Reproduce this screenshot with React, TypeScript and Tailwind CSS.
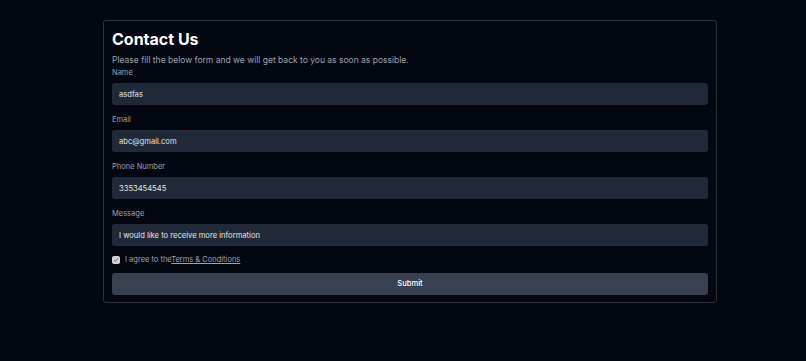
import { useState } from 'react';

const FIELDS = [
  { label: 'Name', value: 'asdfas' },
  { label: 'Email', value: 'abc@gmail.com' },
  { label: 'Phone Number', value: '3353454545' },
  { label: 'Message', value: 'I would like to receive more information' }
];

export default function App() {
  const [values, setValues] = useState(FIELDS.map((f) => f.value));
  const [agreed, setAgreed] = useState(true);

  return (
    <div className="min-h-screen bg-[#030712] pt-5 font-['Inter',sans-serif]">
      <form
        className="ml-[103px] w-[614px] rounded-[3px] border border-[#2b313b] bg-[#030712] px-2 pt-2 pb-[7px]"
        onSubmit={(e) => e.preventDefault()}
      >
        <h1 className="text-[16px] leading-[20px] font-bold text-white">Contact Us</h1>
        <p className="mt-[5px] text-[8.5px] leading-[12px] text-[#9ca3af]">
          Please fill the below form and we will get back to you as soon as possible.
        </p>
        {FIELDS.map((f, i) => (
          <div key={f.label} className="mb-[8px] pt-px">
            <label className="block text-[7.5px] leading-[11px] text-[#9ca3af]">{f.label}</label>
            <input
              value={values[i]}
              onChange={(e) => setValues(values.map((v, j) => (j === i ? e.target.value : v)))}
              className="mt-[5px] block h-[22px] w-full rounded-[3px] bg-[#1f2937] px-[7px] text-[7.6px] text-[#e5e7eb] outline-none"
            />
          </div>
        ))}
        <div className="flex h-[12px] items-center gap-[5px]">
          <button
            type="button"
            onClick={() => setAgreed(!agreed)}
            className={`flex h-2 w-2 items-center justify-center rounded-[2px] ${agreed ? 'bg-[#d1d5db]' : 'bg-[#1f2937]'}`}
          >
            {agreed && (
              <svg viewBox="0 0 12 12" className="h-[6px] w-[6px]">
                <path d="M2.5 6.2 5 8.5 9.5 3.5" fill="none" stroke="#4b5563" strokeWidth="1.8" strokeLinecap="round" strokeLinejoin="round" />
              </svg>
            )}
          </button>
          <span className="text-[7.5px] text-[#9ca3af]">
            I agree to the<a href="#" className="underline">Terms &amp; Conditions</a>
          </span>
        </div>
        <button
          type="submit"
          className="mt-[7px] block h-[22px] w-full rounded-[3px] bg-[#374151] text-[7.6px] font-medium text-white"
        >
          Submit
        </button>
      </form>
    </div>
  );
}
